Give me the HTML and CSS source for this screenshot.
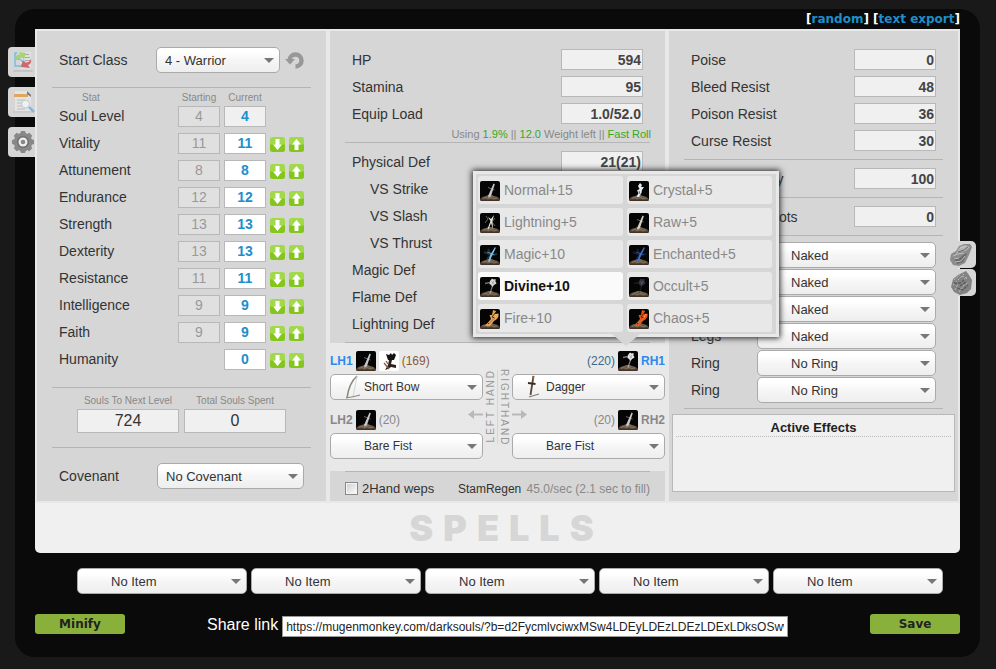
FILE: index.html
```html
<!DOCTYPE html>
<html lang="en">
<head>
<meta charset="utf-8">
<title>Dark Souls Character Planner</title>
<link rel="stylesheet" href="styles.css">
</head>
<body>
<svg class="defs" aria-hidden="true">
  <defs>
    <linearGradient id="ash" x2="0" y2="1">
      <stop offset="0" stop-color="#8a7863"/>
      <stop offset="1" stop-color="#3a2c20"/>
    </linearGradient>
    <symbol id="base" viewBox="0 0 20 20">
      <rect width="20" height="20" rx="2" fill="#050505"/>
      <path d="M0 18Q2 15.500 6 15Q10 13 14 15Q18 15.500 20 18Q20 20 18 20H2Q0 20 0 18Z" fill="url(#ash)"/>
      <path d="M3 17.500l3-1 2 1.500 3-1.500 3 1.500 3-1" stroke="#a08e76" stroke-width=".6" fill="none"/>
    </symbol>
    <symbol id="sword" viewBox="0 0 20 20">
      <use href="#base"/>
      <path d="M13.500 2.500L14.800 3.200 11 15 8.500 17 8.300 14.500Z" fill="currentColor"/>
      <path d="M8 6.500L14.500 9" stroke="currentColor" stroke-width="1" opacity=".5"/>
    </symbol>
    <symbol id="crystal" viewBox="0 0 20 20">
      <use href="#base"/>
      <path d="M11 2L13 4 12 6 15 6 13 9 12.500 12 10 16 7.500 16 9.500 12 8 9.500 10.500 8 9 5Z" fill="currentColor"/>
      <path d="M10 10L11 13" stroke="#66717c"/>
    </symbol>
    <symbol id="bolt" viewBox="0 0 20 20">
      <use href="#base"/>
      <path d="M14 2L12.500 8 13 16 11 10 8.500 16.500 7.500 16 10.500 8 8 4 11 6Z" fill="currentColor"/>
      <path d="M6 3L8 6L5 10M15 5L12 9L15 13" stroke="#8e8a7d" stroke-width=".7" fill="none"/>
    </symbol>
    <symbol id="glow-sword" viewBox="0 0 20 20">
      <use href="#base"/>
      <path d="M4 7L11 10L17 9M8 4L11 10L7 14" stroke="currentColor" stroke-width="2" fill="none" opacity=".22"/>
      <path d="M15 2L15.800 3 11.500 12 9.500 17 8 16.500 10.200 10Z" fill="currentColor"/>
      <path d="M7 7L14.500 10" stroke="currentColor" stroke-width="1" opacity=".7"/>
    </symbol>
    <symbol id="mace" viewBox="0 0 20 20">
      <use href="#base"/>
      <path d="M5 6.500L10 5.500M12.500 9L10 16.500" stroke="currentColor" stroke-width="1.300" opacity=".5"/>
      <path d="M10 4L12 1.500 13.500 2.500 15.500 2 15.500 4.500 16.500 6.500 14 8 12.500 10 11 8 9.500 7Z" fill="currentColor"/>
      <path d="M11.500 4.500L14 6.500M14 4L12 7.500" stroke="#777" stroke-width=".7" opacity=".7"/>
    </symbol>
    <symbol id="flame" viewBox="0 0 20 20">
      <use href="#base"/>
      <path d="M13 1L16 2 15 5 18.500 4.500Q19.500 9 14 12L10 17H5L11 10 9.500 6 12 6Z" fill="currentColor"/>
      <path d="M16 3L12 8L15 9L8 15" stroke="#3b1705" stroke-width="1" fill="none" opacity=".8"/>
      <path d="M17 5L14 10L9 14" stroke="#ffd79a" stroke-width=".8" fill="none" opacity=".7"/>
    </symbol>
    <symbol id="arrows" viewBox="0 0 20 20">
      <rect width="20" height="20" rx="2" fill="#fff"/>
      <path d="M7 3L10 4 12 2 13 4 15 2 17 4 15 9 9 9Z" fill="#161412"/>
      <path d="M10 9L13 9 12 13 17 14 17 17 12 16 9 18 6 19 9 14Z" fill="#2b221c"/>
      <path d="M5 12L10 18M7 10L9 13" stroke="#865c48" stroke-width="1.300"/>
    </symbol>
    <linearGradient id="green" x2="0" y2="1">
      <stop offset=".48" stop-color="#a2d94a"/>
      <stop offset=".52" stop-color="#84c61c"/>
    </linearGradient>
    <symbol id="down" viewBox="0 0 15 15">
      <rect width="15" height="15" rx="2.500" fill="url(#green)"/>
      <path d="M5.500 2H9.500V7.500H12L7.500 13 3 7.500H5.500Z" fill="#fff"/>
    </symbol>
    <symbol id="up" viewBox="0 0 15 15">
      <rect width="15" height="15" rx="2.500" fill="url(#green)"/>
      <path d="M5.500 13H9.500V7.500H12L7.500 2 3 7.500H5.500Z" fill="#fff"/>
    </symbol>
    <symbol id="side-arrow" viewBox="0 0 15 9">
      <path d="M0 3.500H9V0L15 4.500 9 9V5.500H0Z" fill="#b9b9b9"/>
    </symbol>
  </defs>
</svg>

<div class="planner">
  <nav class="top-links">[<a href="#random">random</a>] [<a href="#export">text export</a>]</nav>

  <main class="panel">
    <div class="tabs tabs-left">
      <button type="button" aria-label="Compare builds">
        <svg width="22" height="22" viewBox="0 0 22 22"><path d="M2 19h18l1 2H1z" fill="#c4c4c4"/><path d="M8 1H19V18H8Z" fill="#e0e0e0"/><path d="M12 3.500h5M13 6.500h5M13 9.500h5" stroke="#a9a9a9"/><path d="M5 2H3V15H8M3 8H8" stroke="#7fbcdc" stroke-width="1.500" fill="none"/><path d="M8 8l6 6M8 16l5-6" stroke="#7fbcdc" stroke-width="1.500"/><path d="M3 9Q3 3 8 4L7 1 14 2 12 9 10.500 7Q6 6 3 9Z" fill="#a5d672"/><path d="M19 8Q20 13 16 14L18 17 9 16 11 9 13 11.500Q17 12 19 8Z" fill="#cf686c"/></svg>
      </button>
      <button type="button" aria-label="Search builds">
        <svg width="23" height="24" viewBox="0 0 23 24"><path d="M3 1H16L19 5V21H3Z" fill="#e4e4e4"/><path d="M2 4H16V7H2Z" fill="#dfa75a"/><path d="M15 1L19 5V7L15 4Z" fill="#777"/><path d="M5 10h8M5 13h6M5 16h5M5 19h8" stroke="#bcbcbc"/><path d="M1 22H20" stroke="#c2c2c2"/><circle cx="13.500" cy="14" r="4" fill="#edf1f3" stroke="#c0c9ce"/><path d="M17 17L22 22" stroke="#86b9da" stroke-width="2.500"/></svg>
      </button>
      <button type="button" aria-label="Settings">
        <svg width="22" height="22" viewBox="0 0 22 22"><g fill="#888"><circle cx="11" cy="11" r="9.200"/><path id="cog" d="M9 0H13L14 3H8ZM9 22H13L14 19H8ZM0 9V13L3 14V8ZM22 9V13L19 14V8Z"/><use href="#cog" transform="rotate(45 11 11)"/></g><circle cx="11" cy="11" r="6" fill="#6e6e6e"/><circle cx="11" cy="11" r="4.500" fill="#eee"/><circle cx="11" cy="11" r="2.300" fill="#888"/></svg>
      </button>
    </div>
    <div class="tabs tabs-right">
      <button type="button" aria-label="Smooth stone">
        <svg width="23" height="24" viewBox="0 0 23 24"><path d="M14 1L20 1 22 4 19 12 15 20 9 23 3 22 0 17 1 11 6 8 9 3Z" fill="#8c8c8c"/><path d="M9 5Q14 0 20 4L16 8Q9 8 5 12Z" fill="#b2b2b2"/><path d="M3 15Q9 17 13 12L17 10L13 19L7 21Z" fill="#6c6c6c"/><path d="M10 5L16 3M3 13L8 11L14 10M5 19L11 18L15 13M4 16L9 15" stroke="#cfcfcf" stroke-width=".8" fill="none"/><path d="M8 9L14 7L18 4" stroke="#5d5d5d" stroke-width=".8" fill="none"/></svg>
      </button>
      <button type="button" aria-label="Rough stone">
        <svg width="23" height="24" viewBox="0 0 23 24"><path d="M12 2L16 0 19 4 22 9 21 18 17 22 10 24 4 21 1 16 3 8 8 4Z" fill="#838383"/><path d="M4 9L10 4M3 14L9 8L14 3M5 19L8 13L17 6M9 21L13 15L19 11M12 5L18 8" stroke="#bdbdbd" stroke-dasharray="2 1.500" fill="none"/><path d="M4 12L10 12L15 8M7 17L13 19L18 14M10 15L16 11" stroke="#5a5a5a" stroke-width="1.300" stroke-dasharray="3 1" fill="none"/></svg>
      </button>
    </div>

    <div class="columns">
      <section class="column">
        <div class="class-row">
          <label for="start-class">Start Class</label>
          <span class="pick pick-class"><select id="start-class"><option>4 - Warrior</option></select></span>
          <button type="button" class="bare" aria-label="Reset stats">
            <svg width="19" height="19" viewBox="0 0 19 19"><path d="M4.500 9.500A6 6 0 1 1 10.500 15.500" fill="none" stroke="#989898" stroke-width="4.500"/><path d="M0 8H10L5 13.500Z" fill="#989898"/></svg>
          </button>
        </div>
        <hr>
        <table class="stats">
          <thead><tr><th class="name">Stat</th><th>Starting</th><th>Current</th><th class="step"></th></tr></thead>
          <tbody>
            <tr><td><label for="sl">Soul Level</label></td><td><input class="start" value="4" disabled aria-label="Starting soul level"></td><td><input id="sl" class="current total" value="4" readonly></td><td></td></tr>
            <tr><td><label for="vit">Vitality</label></td><td><input class="start" value="11" disabled aria-label="Starting vitality"></td><td><input id="vit" class="current" value="11"></td><td><div class="steps"><button type="button" class="bare" aria-label="Lower vitality"><svg width="15" height="15"><use href="#down"/></svg></button><button type="button" class="bare" aria-label="Raise vitality"><svg width="15" height="15"><use href="#up"/></svg></button></div></td></tr>
            <tr><td><label for="att">Attunement</label></td><td><input class="start" value="8" disabled aria-label="Starting attunement"></td><td><input id="att" class="current" value="8"></td><td><div class="steps"><button type="button" class="bare" aria-label="Lower attunement"><svg width="15" height="15"><use href="#down"/></svg></button><button type="button" class="bare" aria-label="Raise attunement"><svg width="15" height="15"><use href="#up"/></svg></button></div></td></tr>
            <tr><td><label for="end">Endurance</label></td><td><input class="start" value="12" disabled aria-label="Starting endurance"></td><td><input id="end" class="current" value="12"></td><td><div class="steps"><button type="button" class="bare" aria-label="Lower endurance"><svg width="15" height="15"><use href="#down"/></svg></button><button type="button" class="bare" aria-label="Raise endurance"><svg width="15" height="15"><use href="#up"/></svg></button></div></td></tr>
            <tr><td><label for="str">Strength</label></td><td><input class="start" value="13" disabled aria-label="Starting strength"></td><td><input id="str" class="current" value="13"></td><td><div class="steps"><button type="button" class="bare" aria-label="Lower strength"><svg width="15" height="15"><use href="#down"/></svg></button><button type="button" class="bare" aria-label="Raise strength"><svg width="15" height="15"><use href="#up"/></svg></button></div></td></tr>
            <tr><td><label for="dex">Dexterity</label></td><td><input class="start" value="13" disabled aria-label="Starting dexterity"></td><td><input id="dex" class="current" value="13"></td><td><div class="steps"><button type="button" class="bare" aria-label="Lower dexterity"><svg width="15" height="15"><use href="#down"/></svg></button><button type="button" class="bare" aria-label="Raise dexterity"><svg width="15" height="15"><use href="#up"/></svg></button></div></td></tr>
            <tr><td><label for="res">Resistance</label></td><td><input class="start" value="11" disabled aria-label="Starting resistance"></td><td><input id="res" class="current" value="11"></td><td><div class="steps"><button type="button" class="bare" aria-label="Lower resistance"><svg width="15" height="15"><use href="#down"/></svg></button><button type="button" class="bare" aria-label="Raise resistance"><svg width="15" height="15"><use href="#up"/></svg></button></div></td></tr>
            <tr><td><label for="int">Intelligence</label></td><td><input class="start" value="9" disabled aria-label="Starting intelligence"></td><td><input id="int" class="current" value="9"></td><td><div class="steps"><button type="button" class="bare" aria-label="Lower intelligence"><svg width="15" height="15"><use href="#down"/></svg></button><button type="button" class="bare" aria-label="Raise intelligence"><svg width="15" height="15"><use href="#up"/></svg></button></div></td></tr>
            <tr><td><label for="fai">Faith</label></td><td><input class="start" value="9" disabled aria-label="Starting faith"></td><td><input id="fai" class="current" value="9"></td><td><div class="steps"><button type="button" class="bare" aria-label="Lower faith"><svg width="15" height="15"><use href="#down"/></svg></button><button type="button" class="bare" aria-label="Raise faith"><svg width="15" height="15"><use href="#up"/></svg></button></div></td></tr>
            <tr><td><label for="hum">Humanity</label></td><td></td><td><input id="hum" class="current" value="0"></td><td><div class="steps"><button type="button" class="bare" aria-label="Lower humanity"><svg width="15" height="15"><use href="#down"/></svg></button><button type="button" class="bare" aria-label="Raise humanity"><svg width="15" height="15"><use href="#up"/></svg></button></div></td></tr>
          </tbody>
        </table>
        <hr>
        <div class="souls">
          <label for="next">Souls To Next Level</label>
          <label for="spent">Total Souls Spent</label>
          <input id="next" value="724" readonly>
          <input id="spent" value="0" readonly>
        </div>
        <hr>
        <div class="covenant-row">
          <label for="covenant">Covenant</label>
          <span class="pick pick-covenant"><select id="covenant"><option>No Covenant</option></select></span>
        </div>
      </section>

      <section class="column column-middle">
        <div class="shade fields">
          <div class="field"><label for="hp">HP</label><input id="hp" value="594" readonly></div>
          <div class="field"><label for="stamina">Stamina</label><input id="stamina" value="95" readonly></div>
          <div class="field"><label for="load">Equip Load</label><input id="load" value="1.0/52.0" readonly></div>
          <p class="load-note">Using <b>1.9%</b> || <b>12.0</b> Weight left || <b>Fast Roll</b></p>
          <hr>
          <div class="group">
            <div class="field"><label for="phys">Physical Def</label><input id="phys" value="21(21)" readonly></div>
            <div class="field sub"><label for="strike">VS Strike</label><input id="strike" readonly></div>
            <div class="field sub"><label for="slash">VS Slash</label><input id="slash" readonly></div>
            <div class="field sub"><label for="thrust">VS Thrust</label><input id="thrust" readonly></div>
            <div class="field"><label for="magic">Magic Def</label><input id="magic" readonly></div>
            <div class="field"><label for="fire">Flame Def</label><input id="fire" readonly></div>
            <div class="field"><label for="lightning">Lightning Def</label><input id="lightning" readonly></div>
          </div>
          <hr>
        </div>

        <div class="weapons">
          <div class="hand">
            <div class="slot">
              <div class="slot-head active"><label for="lh1">LH1</label><svg width="20" height="20" color="#c9c9c9"><use href="#sword"/></svg><svg width="20" height="20"><use href="#arrows"/></svg><span class="rating physical">(169)</span></div>
              <span class="pick pick-weapon"><svg class="thumb" width="16" height="25" viewBox="0 0 16 25"><path d="M12 1Q4 8 2 23" fill="none" stroke="#8d8a80" stroke-width="1.600"/><path d="M12 1L8 22" stroke="#ccc" stroke-width=".8"/><path d="M1 23Q8 22 15 20" fill="none" stroke="#8d8a80" stroke-width="1.200"/></svg><select id="lh1"><option>Short Bow</option></select></span>
            </div>
            <div class="slot">
              <div class="slot-head"><label for="lh2">LH2</label><svg width="20" height="20" color="#c9c9c9"><use href="#sword"/></svg><span class="rating">(20)</span></div>
              <span class="pick pick-weapon"><select id="lh2"><option>Bare Fist</option></select></span>
            </div>
          </div>
          <div class="divide">
            <span class="side side-left">LEFT HAND</span>
            <span class="side side-right">RIGHTHAND</span>
            <svg class="point point-left" width="15" height="9"><use href="#side-arrow"/></svg>
            <svg class="point point-right" width="15" height="9"><use href="#side-arrow"/></svg>
          </div>
          <div class="hand hand-right">
            <div class="slot">
              <div class="slot-head active"><label for="rh1">RH1</label>
                <div class="infusion">
                  <button type="button" class="bare" aria-label="Infusion"><svg width="20" height="20" color="#e8e8e8"><use href="#mace"/></svg></button>
                  <div class="menu">
                    <button type="button"><svg width="20" height="20" color="#c9c9c9"><use href="#sword"/></svg>Normal+15</button>
                    <button type="button"><svg width="20" height="20" color="#e3edf4"><use href="#crystal"/></svg>Crystal+5</button>
                    <button type="button"><svg width="20" height="20" color="#e9e7dc"><use href="#bolt"/></svg>Lightning+5</button>
                    <button type="button"><svg width="20" height="20" color="#d5d0c9"><use href="#sword"/></svg>Raw+5</button>
                    <button type="button"><svg width="20" height="20" color="#7cc4ee"><use href="#glow-sword"/></svg>Magic+10</button>
                    <button type="button"><svg width="20" height="20" color="#3f6fd0"><use href="#glow-sword"/></svg>Enchanted+5</button>
                    <button type="button" class="chosen"><svg width="20" height="20" color="#d8d8d8"><use href="#mace"/></svg>Divine+10</button>
                    <button type="button"><svg width="20" height="20" color="#34313f"><use href="#mace"/></svg>Occult+5</button>
                    <button type="button"><svg width="20" height="20" color="#e5a350"><use href="#flame"/></svg>Fire+10</button>
                    <button type="button"><svg width="20" height="20" color="#ec5310"><use href="#flame"/></svg>Chaos+5</button>
                  </div>
                </div>
                <span class="rating magical">(220)</span></div>
              <span class="pick pick-weapon"><svg class="thumb" width="16" height="25" viewBox="0 0 16 25"><path d="M6.500 1L3.500 20" stroke="#5b4636" stroke-width="1.800"/><path d="M1 8L8.500 9" stroke="#3b2c22" stroke-width="1.800"/><path d="M6.500 1L6 4" stroke="#a0623a" stroke-width="1.800"/><path d="M2 22L12 19" stroke="#7d7d76" stroke-width="1.300"/></svg><select id="rh1"><option>Dagger</option></select></span>
            </div>
            <div class="slot">
              <div class="slot-head"><label for="rh2">RH2</label><svg width="20" height="20" color="#c9c9c9"><use href="#sword"/></svg><span class="rating">(20)</span></div>
              <span class="pick pick-weapon"><select id="rh2"><option>Bare Fist</option></select></span>
            </div>
          </div>
        </div>

        <div class="shade regen">
          <hr>
          <div class="regen-row">
            <input type="checkbox" id="two-hand"><label for="two-hand">2Hand weps</label>
            <span class="regen-value">StamRegen <i>45.0/sec (2.1 sec to fill)</i></span>
          </div>
        </div>
      </section>

      <section class="column fields">
        <div class="field"><label for="poise">Poise</label><input id="poise" value="0" readonly></div>
        <div class="field"><label for="bleed">Bleed Resist</label><input id="bleed" value="48" readonly></div>
        <div class="field"><label for="poison">Poison Resist</label><input id="poison" value="36" readonly></div>
        <div class="field"><label for="curse">Curse Resist</label><input id="curse" value="30" readonly></div>
        <hr class="tight">
        <div class="group"><div class="field"><label for="discovery">Item Discovery</label><input id="discovery" value="100" readonly></div></div>
        <hr>
        <div class="group"><div class="field"><label for="slots">Attunement Slots</label><input id="slots" value="0" readonly></div></div>
        <hr>
        <div class="gear">
          <span class="pick"><select aria-label="Head"><option>Naked</option></select></span>
          <span class="pick"><select aria-label="Chest"><option>Naked</option></select></span>
          <span class="pick"><select aria-label="Hands"><option>Naked</option></select></span>
          <label for="legs">Legs</label><span class="pick"><select id="legs"><option>Naked</option></select></span>
          <label for="ring1">Ring</label><span class="pick"><select id="ring1"><option>No Ring</option></select></span>
          <label for="ring2">Ring</label><span class="pick"><select id="ring2"><option>No Ring</option></select></span>
        </div>
        <hr>
        <div class="effects"><h2>Active Effects</h2></div>
      </section>
    </div>
    <h1 class="spells">SPELLS</h1>
  </main>

  <div class="items">
    <span class="pick"><select aria-label="Item 1"><option>No Item</option></select></span>
    <span class="pick"><select aria-label="Item 2"><option>No Item</option></select></span>
    <span class="pick"><select aria-label="Item 3"><option>No Item</option></select></span>
    <span class="pick"><select aria-label="Item 4"><option>No Item</option></select></span>
    <span class="pick"><select aria-label="Item 5"><option>No Item</option></select></span>
  </div>

  <footer class="actions">
    <button type="button">Minify</button>
    <div class="share">
      <label for="link">Share link</label>
      <input id="link" value="https://mugenmonkey.com/darksouls/?b=d2FycmlvciwxMSw4LDEyLDEzLDEzLDExLDksOSwwLDAsMCww" readonly>
    </div>
    <button type="button">Save</button>
  </footer>
</div>
</body>
</html>
```
FILE: styles.css
```css
* {
  box-sizing: border-box;
}

body {
  margin: 0;
  padding: 9px 16px 12px 15px;
  background: #191919;
  color: #333;
  font: 14px/16px "Liberation Sans", Arial, sans-serif;
}

input,
select,
button {
  margin: 0;
  font: inherit;
  color: inherit;
}

.defs {
  position: absolute;
  width: 0;
  height: 0;
}

svg {
  display: block;
  flex: none;
}

hr {
  height: 1px;
  margin: 0 15px;
  border: 0;
  background: #b5b5b5;
}

.bare {
  display: block;
  padding: 0;
  border: 0;
  background: none;
}

.planner {
  min-width: 940px;
  padding: 0 20px 20px;
  border-radius: 20px;
  background: #0a0a0a;
}

.top-links {
  height: 20px;
  color: #fff;
  font: bold 12px/20px "DejaVu Sans", Verdana, sans-serif;
  text-align: right;
}

.top-links a {
  color: #1c8fcc;
  text-decoration: none;
}

/* Main panel */
.panel {
  position: relative;
  border-radius: 0 0 5px 5px;
  background: #f0f0f0;
}

.columns {
  display: grid;
  grid-template-columns: 289fr 335fr 289fr;
  gap: 4px;
  padding: 2px;
  background: #e8e8e8;
}

.column,
.shade {
  background: #d6d6d6;
}

.column-middle {
  background: none;
}

.spells {
  margin: 0;
  padding: 1px 0 1px 18px;
  color: #d6d6d6;
  font: 900 36px/48px Inter, "Arial Black", sans-serif;
  letter-spacing: 10px;
  text-align: center;
}

/* Side tabs */
.tabs {
  position: absolute;
  display: flex;
  flex-direction: column;
}

.tabs button {
  display: flex;
  align-items: center;
  padding: 0;
  border: 0;
  background: #d6d6d6;
}

.tabs-left {
  top: 18px;
  right: 100%;
  gap: 10px;
}

.tabs-left button {
  width: 27px;
  height: 30px;
  padding-left: 4px;
  border-radius: 4px 0 0 4px;
}

.tabs-right {
  top: 212px;
  right: -16px;
  gap: 1px;
}

.tabs-right button {
  width: 26px;
  height: 27px;
  border-radius: 0 5px 5px 0;
}

/* Drop-downs */
.pick {
  position: relative;
  display: block;
}

.pick::after {
  content: "";
  position: absolute;
  top: 11px;
  right: 6px;
  border: solid transparent;
  border-width: 5px 5px 0;
  border-top-color: #777;
  pointer-events: none;
}

.pick select {
  display: block;
  width: 100%;
  height: 26px;
  padding: 1px 20px 0 33px;
  border: 1px solid #aaa;
  border-radius: 5px;
  appearance: none;
  background: linear-gradient(#fff 20%, #f6f6f6 50%, #eee);
  color: #333;
  font-size: 13px;
}

.pick-class select,
.pick-covenant select {
  padding-left: 8px;
}

.pick-class {
  width: 124px;
  margin-left: auto;
}

.pick-covenant {
  width: 147px;
  margin-left: auto;
}

.pick-weapon select {
  padding-top: 0;
  font-size: 12px;
}

.thumb {
  position: absolute;
  top: 1px;
  left: 15px;
  pointer-events: none;
}

/* Stats */
.class-row {
  display: flex;
  align-items: center;
  gap: 5px;
  height: 56px;
  padding: 2px 22px 0;
}

.stats {
  width: calc(100% - 44px);
  margin: 0 22px 14px;
  border-spacing: 0;
  table-layout: fixed;
}

.stats th {
  width: 46px;
  height: 15px;
  padding: 4px 4px 0 0;
  color: #888;
  font-size: 10px;
  font-weight: normal;
  line-height: 11px;
  text-align: center;
  white-space: nowrap;
}

.stats .name {
  width: auto;
  padding-left: 23px;
  text-align: left;
}

.stats .step {
  width: 34px;
}

.stats td {
  height: 27px;
  padding: 0;
}

.stats label {
  display: block;
  padding-bottom: 2px;
}

.stats input {
  display: block;
  width: 42px;
  height: 21px;
  padding: 0 0 2px;
  border: 1px solid #b8b8b8;
  text-align: center;
}

.stats .start {
  background: #e0e0e0;
  color: #999;
}

.stats .current {
  background: #fff;
  color: #1c8fcc;
  font-weight: bold;
}

.stats .total {
  background: #f0f0f0;
}

.steps {
  display: flex;
  gap: 4px;
  padding-top: 2px;
}

.souls {
  display: grid;
  grid-template-columns: 1fr 1fr;
  gap: 2px 5px;
  margin: 7px 40px 14px;
}

.souls label {
  color: #888;
  font-size: 10px;
  line-height: 12px;
  text-align: center;
}

.souls input {
  width: 100%;
  height: 24px;
  padding: 0;
  border: 1px solid #b8b8b8;
  background: #f0f0f0;
  font-size: 16px;
  text-align: center;
}

.covenant-row {
  display: flex;
  align-items: center;
  margin: 15px 22px 12px;
}

/* Derived values */
.fields {
  padding-top: 15px;
}

.field {
  display: flex;
  align-items: center;
  justify-content: space-between;
  height: 27px;
  padding: 0 22px;
}

.field input {
  width: 82px;
  height: 21px;
  padding: 0 1px;
  border: 1px solid #b8b8b8;
  background: #f0f0f0;
  color: #444;
  font-weight: bold;
  text-align: right;
}

.sub {
  padding-left: 40px;
}

.group {
  padding: 5px 0;
}

.tight {
  margin-top: 5px;
}

.load-note {
  margin: 0 14px;
  color: #888;
  font-size: 11px;
  line-height: 15px;
  text-align: right;
}

.load-note b {
  color: #3a2;
  font-weight: normal;
}

/* Weapons */
.weapons {
  display: grid;
  grid-template-columns: 1fr 29px 1fr;
  padding: 8px 0 12px;
}

.hand {
  display: grid;
  gap: 10px;
}

.slot-head {
  display: flex;
  align-items: center;
  gap: 3px;
  height: 20px;
  margin-bottom: 3px;
  color: #888;
  font-size: 12px;
}

.slot-head label {
  font-weight: bold;
}

.hand-right .slot-head {
  flex-direction: row-reverse;
}

.active label {
  color: #2a8af0;
}

.physical {
  color: #8a5a3c;
}

.magical {
  color: #3c6a8a;
}

.divide {
  position: relative;
  display: flex;
  justify-content: space-between;
  padding: 18px 2px 0;
}

.divide::before {
  content: "";
  position: absolute;
  top: 19px;
  bottom: 15px;
  left: 14px;
  width: 1px;
  background: #d6d6d6;
}

.side {
  color: #999;
  font-size: 10px;
  line-height: 12px;
  letter-spacing: 2px;
  white-space: nowrap;
  writing-mode: vertical-rl;
}

.side-left {
  align-self: flex-start;
  transform: rotate(180deg);
}

.point {
  position: absolute;
  top: 59px;
}

.point-left {
  right: 100%;
  transform: scaleX(-1);
}

.point-right {
  left: 100%;
}

.infusion {
  position: relative;
}

.menu {
  position: absolute;
  bottom: calc(100% + 14px);
  left: -145px;
  z-index: 2;
  display: grid;
  grid-template-columns: 145px 145px;
  gap: 4px;
  padding: 2px 4px 2px 2px;
  border: 3px solid #e8e8e8;
  background: #d6d6d6;
  box-shadow: 0 0 6px 1px #222;
}

.menu::after {
  content: "";
  position: absolute;
  top: 100%;
  left: 136px;
  border: solid transparent;
  border-width: 12px 14px 0;
  border-top-color: #d6d6d6;
}

.menu button {
  display: flex;
  align-items: center;
  gap: 4px;
  height: 28px;
  padding: 0 2px;
  border: 0;
  border-radius: 3px;
  background: #e8e8e8;
  color: #888;
  font-size: 14px;
}

.menu svg {
  margin-top: 2px;
}

.menu .chosen {
  background: #fafafa;
  color: #111;
  font-weight: bold;
}

.regen-row {
  display: flex;
  align-items: center;
  height: 29px;
  padding: 4px 15px 0;
  font-size: 12px;
}

.regen-row input {
  width: 13px;
  height: 13px;
  margin-right: 4px;
  border: 1px solid #888;
  appearance: none;
  background: linear-gradient(135deg, #ccc, #fff);
  box-shadow: inset 0 0 0 1px #f4f4f4;
}

.regen-row label {
  font-size: 13px;
}

.regen-value {
  margin-left: auto;
}

.regen-value i {
  margin-left: 2px;
  color: #888;
  font-style: normal;
}

/* Equipment */
.gear {
  display: grid;
  grid-template-columns: 65px 1fr;
  align-items: center;
  gap: 1px;
  margin: 6px 22px 5px;
}

.gear .pick {
  grid-column: 2;
}

.effects {
  min-height: 78px;
  margin: 5px 3px 9px;
  padding: 4px 3px;
  border: 1px solid #b8b8b8;
  background: #f0f0f0;
}

.effects h2 {
  margin: 0;
  border-bottom: 1px dotted #bbb;
  color: #222;
  font-size: 13px;
  line-height: 17px;
  text-align: center;
}

/* Footer */
.items {
  display: grid;
  grid-template-columns: repeat(5, 1fr);
  gap: 4px;
  margin: 15px 17px 20px 42px;
}

.actions {
  display: flex;
  align-items: flex-start;
  justify-content: space-between;
}

.actions button {
  width: 90px;
  height: 20px;
  padding: 0;
  border: 0;
  border-radius: 3px;
  background: #8ab03c;
  color: #222;
  font: bold 12px/20px "DejaVu Sans", Verdana, sans-serif;
}

.share {
  display: flex;
  align-items: center;
  flex: 1;
  gap: 4px;
  margin: 0 82px;
  color: #fff;
  font-size: 16px;
}

.share label {
  margin-bottom: 2px;
}

.share input {
  flex: 1;
  min-width: 0;
  height: 21px;
  margin-top: 2px;
  padding: 0 3px;
  border: 1px solid #999;
  background: #fff;
  color: #222;
  font-size: 12px;
}
```
